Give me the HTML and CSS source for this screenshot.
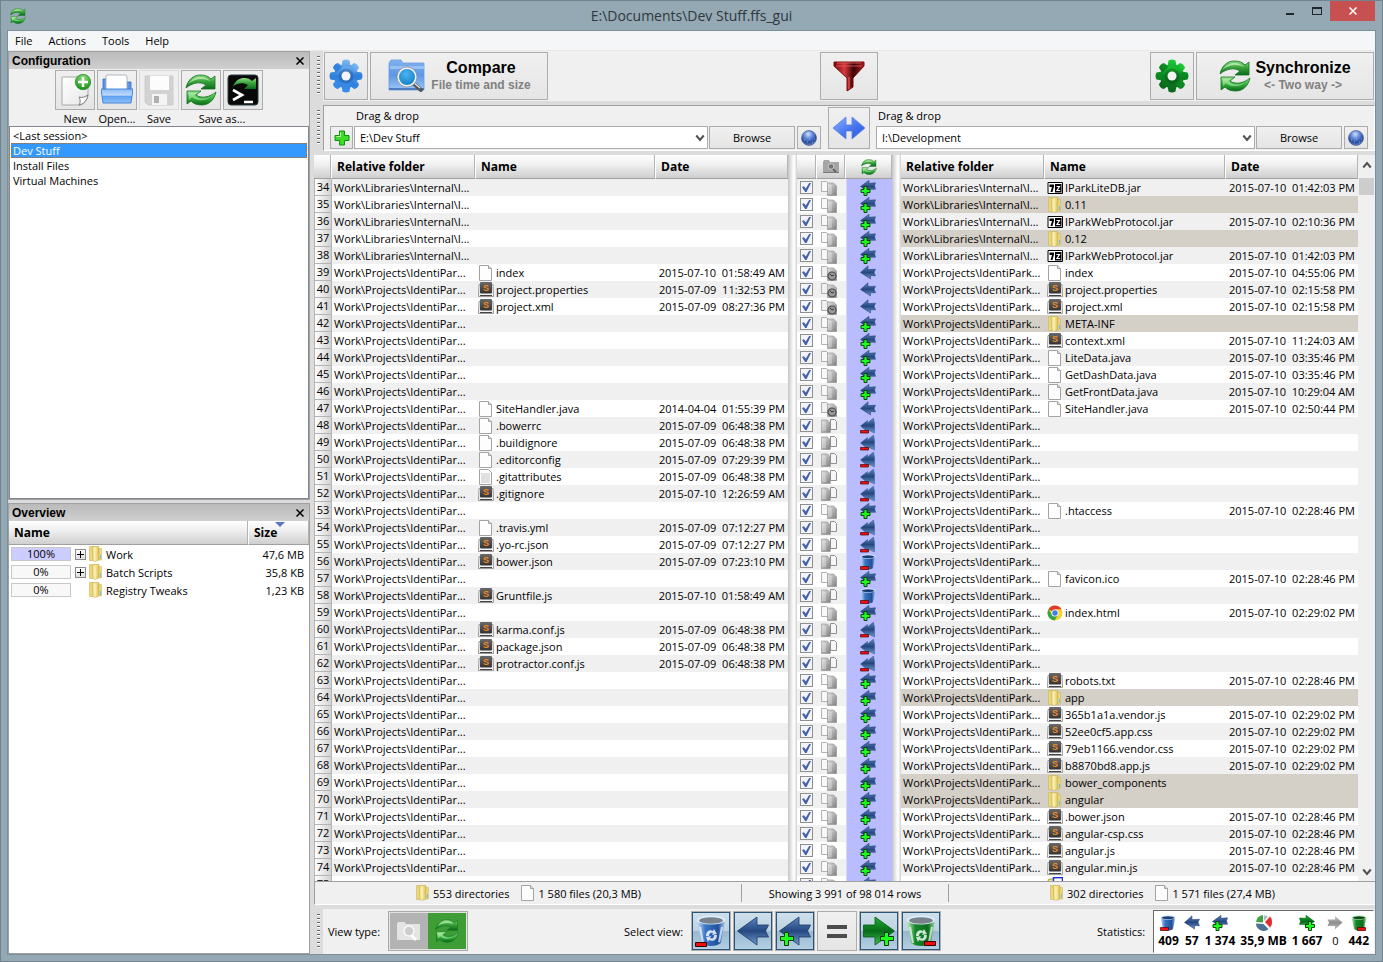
FILE: index.html
```html
<!DOCTYPE html>
<html lang="en">
<head>
<meta charset="utf-8">
<title>E:\Documents\Dev Stuff.ffs_gui</title>
<link rel="stylesheet" href="styles.css">
</head>
<body>
<svg class="defs" aria-hidden="true">
  <defs>
    <linearGradient id="gGreen" x1="0" y1="0" x2="0" y2="1"><stop offset="0" stop-color="#8fdc83"/><stop offset=".45" stop-color="#3aa53c"/><stop offset="1" stop-color="#0b6a1a"/></linearGradient>
    <linearGradient id="gGreen2" x1="0" y1="1" x2="0" y2="0"><stop offset="0" stop-color="#0a6a18"/><stop offset=".5" stop-color="#35b23c"/><stop offset="1" stop-color="#a4ec9b"/></linearGradient>
    <linearGradient id="gGearB" x1="0" y1="0" x2="0" y2="1"><stop offset="0" stop-color="#7fbaf2"/><stop offset=".5" stop-color="#2f7fdc"/><stop offset="1" stop-color="#3a8cea"/></linearGradient>
    <linearGradient id="gGearG" x1="0" y1="0" x2="0" y2="1"><stop offset="0" stop-color="#1fd038"/><stop offset=".45" stop-color="#0c8a22"/><stop offset="1" stop-color="#0a661a"/></linearGradient>
    <linearGradient id="gFolderB" x1="0" y1="0" x2="0" y2="1"><stop offset="0" stop-color="#82b3ee"/><stop offset=".5" stop-color="#5c97e6"/><stop offset="1" stop-color="#9cc7f7"/></linearGradient>
    <linearGradient id="gTray" x1="0" y1="0" x2="0" y2="1"><stop offset="0" stop-color="#8dbcf5"/><stop offset=".45" stop-color="#bcd9fb"/><stop offset=".5" stop-color="#5e9df0"/><stop offset="1" stop-color="#8ec3fb"/></linearGradient>
    <linearGradient id="gFolder" x1="0" y1="0" x2="1" y2="0"><stop offset="0" stop-color="#e8d170"/><stop offset=".4" stop-color="#fbf2b8"/><stop offset="1" stop-color="#d9bd4c"/></linearGradient>
    <linearGradient id="gPage" x1="0" y1="0" x2="1" y2="1"><stop offset="0" stop-color="#fff"/><stop offset="1" stop-color="#e6e6e6"/></linearGradient>
    <linearGradient id="gGreyPage" x1="0" y1="0" x2="1" y2="1"><stop offset="0" stop-color="#e2e2e2"/><stop offset="1" stop-color="#7e7e7e"/></linearGradient>
    <linearGradient id="gArrow" x1="0" y1="0" x2="0" y2="1"><stop offset="0" stop-color="#5b86c4"/><stop offset=".5" stop-color="#25477f"/><stop offset="1" stop-color="#6d9bd0"/></linearGradient>
    <linearGradient id="gArrowG" x1="0" y1="0" x2="0" y2="1"><stop offset="0" stop-color="#17b52c"/><stop offset=".5" stop-color="#076a19"/><stop offset="1" stop-color="#3fc24c"/></linearGradient>
    <linearGradient id="gArrowN" x1="0" y1="0" x2="0" y2="1"><stop offset="0" stop-color="#c8c8c8"/><stop offset=".5" stop-color="#8d8d8d"/><stop offset="1" stop-color="#c0c0c0"/></linearGradient>
    <linearGradient id="gSwap" x1="0" y1="0" x2="1" y2="1"><stop offset="0" stop-color="#8fb2ff"/><stop offset=".55" stop-color="#4675ef"/><stop offset="1" stop-color="#2b57d8"/></linearGradient>
    <linearGradient id="gFunnel" x1="0" y1="0" x2="1" y2="0"><stop offset="0" stop-color="#7d0a0c"/><stop offset=".35" stop-color="#d9393c"/><stop offset=".65" stop-color="#3a0405"/><stop offset="1" stop-color="#b01a1d"/></linearGradient>
    <linearGradient id="gBin" x1="0" y1="0" x2="1" y2="0"><stop offset="0" stop-color="#c9e2fb"/><stop offset=".3" stop-color="#3a76c4"/><stop offset=".75" stop-color="#1f4f9c"/><stop offset="1" stop-color="#a8cbf2"/></linearGradient>
    <linearGradient id="gBinG" x1="0" y1="0" x2="1" y2="0"><stop offset="0" stop-color="#c2efc2"/><stop offset=".3" stop-color="#15872a"/><stop offset=".75" stop-color="#0b6d1d"/><stop offset="1" stop-color="#9fdda3"/></linearGradient>
    <linearGradient id="gDark" x1="0" y1="0" x2="0" y2="1"><stop offset="0" stop-color="#6a6a6a"/><stop offset="1" stop-color="#333"/></linearGradient>
    <radialGradient id="gGlobe" cx=".45" cy=".25" r=".75"><stop offset="0" stop-color="#cfe0ff"/><stop offset=".35" stop-color="#6c92dd"/><stop offset=".75" stop-color="#274a9c"/><stop offset="1" stop-color="#6f8fd0"/></radialGradient>
    <radialGradient id="gBall" cx=".5" cy=".25" r=".8"><stop offset="0" stop-color="#8fe07a"/><stop offset="1" stop-color="#118a12"/></radialGradient>
    <radialGradient id="gLens" cx=".45" cy=".35" r=".7"><stop offset="0" stop-color="#4db4ee"/><stop offset="1" stop-color="#0b7cc4"/></radialGradient>
  </defs>

  <symbol id="sync" viewBox="0 0 32 32">
    <path d="M1 14C3 5 9 1 15 1c5 0 8 1 11 4l4-3v13H16l5-4C15 7 7 9 1 14z" fill="url(#gGreen)" stroke="#14701f" stroke-width=".8"/>
    <path d="M3 10C7 4 13 2.500 17 3c4 .4 6 2 8 4-6-3-15-3-22 3z" fill="#c9f5bf" opacity=".7"/>
    <path d="M31 18C29 27 23 31 17 31c-5 0-8-1-11-4l-4 3V17h14l-5 4c6 4 14 2 20-3z" fill="url(#gGreen2)" stroke="#14701f" stroke-width=".8"/>
    <path d="M4 19h8l-3 2c5 5 13 4 18 1-6 5-15 6-20 1l-3 3z" fill="#c9f5bf" opacity=".5"/>
  </symbol>
  <symbol id="new" viewBox="0 0 32 32">
    <path d="M3 3h26v18c-1 5-4 9-8 10H3z" fill="url(#gPage)" stroke="#a9a9a9"/>
    <path d="M20 31c2-3 1-6 0-8 3 1 6 0 9-2-1 5-4 9-9 10z" fill="#fff" stroke="#777"/>
    <circle cx="24" cy="8" r="7.700" fill="url(#gBall)" stroke="#0d7d10" stroke-width=".6"/>
    <path d="M24 3v10M19 8h10" stroke="#fff" stroke-width="2.400"/>
  </symbol>
  <symbol id="open" viewBox="0 0 32 32">
    <path d="M2 16V5h6v11M24 16V8h6v8" fill="#5b97e8" stroke="#2d6fce" stroke-width=".8"/>
    <path d="M6 1h19l1 2v15H5V2z" fill="#fff" stroke="#9fa8b5" stroke-width=".8"/>
    <path d="M0 15h32l-2 14H2z" fill="url(#gTray)" stroke="#3a7bd6" stroke-width=".9"/>
  </symbol>
  <symbol id="save" viewBox="0 0 32 32">
    <path d="M2 2h28v29H5l-3-3z" fill="#d2d2d2" stroke="#c6c6c6" stroke-width=".8"/>
    <path d="M7 2h19v14H7z" fill="#fcfcfc"/><path d="M9 20h15v11H9z" fill="#f4f4f4"/><path d="M11 22h5v7h-5z" fill="#b0b0b0"/>
  </symbol>
  <symbol id="batch" viewBox="0 0 32 32">
    <rect x="1" y="1" width="30" height="30" rx="3" fill="#080808" stroke="#2c3c40"/>
    <path d="M6 12c3-6 7-8 11-8 4 0 6 1 8 3l4-3v11H17l4-4c-5-3-10-2-15 1z" fill="url(#gGreen)"/>
    <path d="M6 16l9 5-9 5M17 28h9" fill="none" stroke="#fff" stroke-width="2.600"/>
  </symbol>
  <symbol id="gear" viewBox="0 0 34 34">
    <circle cx="17" cy="17" r="12"/>
    <path d="M13.500 1.500q3.500-2 7 0l1 6h-9zM13.500 32.500q3.500 2 7 0l1-6h-9zM1.500 13.500q-2 3.500 0 7l6 1v-9zM32.500 13.500q2 3.500 0 7l-6 1v-9z"/>
    <path transform="rotate(45 17 17)" d="M13.500 2q3.500-2 7 0l1 6h-9zM13.500 32q3.500 2 7 0l1-6h-9zM2 13.500q-2 3.500 0 7l6 1v-9zM32 13.500q2 3.500 0 7l-6 1v-9z"/>
    <circle cx="17" cy="17" r="7.500" fill="#000" opacity=".15"/>
    <circle cx="17" cy="17" r="4.500" fill="#f4f4f4"/>
  </symbol>
  <symbol id="compare" viewBox="0 0 40 34">
    <path d="M2 4l2-3h10l2 3h21v27H2z" fill="url(#gFolderB)" stroke="#6a9be0" stroke-width=".8"/>
    <path d="M3 7h34v3H3z" fill="#a9ccf6" opacity=".7"/><path d="M2 29h35v2H2z" fill="#4d7dc0"/>
    <path d="M26 24l8 7" stroke="#555" stroke-width="4" stroke-linecap="round"/><path d="M26 23l7 6" stroke="#ddd" stroke-width="1.500"/>
    <circle cx="20" cy="18" r="9" fill="url(#gLens)" stroke="#f2f2f2" stroke-width="2"/><circle cx="20" cy="18" r="10" fill="none" stroke="#8a8a8a" stroke-width=".7"/>
  </symbol>
  <symbol id="funnel" viewBox="0 0 32 32">
    <path d="M1 2h30v4L20 18v9l-6 4V18L1 6z" fill="url(#gFunnel)" stroke="#7a0c0e"/>
    <path d="M3 6h26M4 3h24" stroke="#e06265" stroke-width=".8"/><path d="M16 17v12" stroke="#e0484b" stroke-width="1.500"/>
  </symbol>
  <symbol id="plus" viewBox="0 0 16 16"><path d="M5.500 1h5v4.500H15v5h-4.500V15h-5v-4.500H1v-5h4.500z" fill="#3ddc2a" stroke="#0f8f0b"/><path d="M6.500 2.500v4h-4" fill="none" stroke="#b5f7a5"/></symbol>
  <symbol id="globe" viewBox="0 0 16 16"><circle cx="8" cy="8" r="7.500" fill="url(#gGlobe)" stroke="#3c4f80" stroke-width=".6"/><path d="M3 10h.8M6 12h.8M11 12h.8M13 9h.8M8 9h.8" fill="none" stroke="#b5ccff" stroke-width=".8"/></symbol>
  <symbol id="swap" viewBox="0 0 34 24"><path d="M14 1v8h6V1l13 11-13 11v-8h-6v8L1 12z" fill="url(#gSwap)" stroke="#5b7fe6" stroke-width=".8"/></symbol>
  <symbol id="folder" viewBox="0 0 16 16"><path d="M1.500.500h7v14h-7z" fill="#ecd87c" stroke="#cfb55a" stroke-width=".6"/><path d="M4 1l4-.5h3V14l-4 1.500-2-1z" fill="url(#gFolder)" stroke="#c9ad45" stroke-width=".5"/><path d="M11 2.500h2.500V14H11z" fill="#ecd982" stroke="#cdb350" stroke-width=".5"/><path d="M12.500 9v4" stroke="#6fc0ee"/></symbol>
  <symbol id="file" viewBox="0 0 16 16"><path d="M1.500.500h9l3 3v12h-12z" fill="#fdfdfd" stroke="#a3a3a3"/><path d="M10.500.500v3h3" fill="#ddd" stroke="#a3a3a3"/></symbol>
  <symbol id="text" viewBox="0 0 16 16"><path d="M1.500.500h9l3 3v12h-12z" fill="#fdfdfd" stroke="#a3a3a3"/><path d="M3 5h9M3 7h9M3 9h9M3 11h9M3 13h9" stroke="#b5b5b5" stroke-width=".8"/></symbol>
  <symbol id="subl" viewBox="0 0 16 16"><path d="M1 2.500L.5 14.500h15L15 2.500z" fill="#f4f4f4" stroke="#9a9a9a"/><rect x="2" y="0" width="12" height="11.500" rx="1" fill="url(#gDark)"/><path d="M2 13.500h12" stroke="#444"/><text x="8" y="9" text-anchor="middle" font-family="Liberation Sans,sans-serif" font-size="9" font-weight="bold" fill="#f08a26">S</text></symbol>
  <symbol id="zip" viewBox="0 0 16 16"><path d="M1 2.500h14.500v11H1z" fill="#fff" stroke="#000"/><path d="M2.500 4.500h4.500v2L5.500 12H3.500L5 7H2.500z"/><path d="M8 4h6.500v8.500H8z"/><path d="M9.500 6.500h3L10 10.500h3.200" fill="none" stroke="#fff" stroke-width="1.200"/></symbol>
  <symbol id="chrome" viewBox="0 0 16 16"><circle cx="8" cy="8" r="7.500" fill="#fbd12e"/><path d="M8 8L1.500 4.300A7.500 7.500 0 0 1 14.500 4.300H8z" fill="#de3b2e"/><path d="M1.500 4.300A7.500 7.500 0 0 0 7.500 15.500L11 10 8 8 4.500 9z" fill="#33a449"/><circle cx="8" cy="8" r="3.600" fill="#fff"/><circle cx="8" cy="8" r="2.700" fill="#3f7de0"/></symbol>
  <symbol id="html" viewBox="0 0 16 16"><rect x="1" y="2" width="9" height="12" rx="2" fill="#f3e691" stroke="#a39a35"/><rect x="6.500" y=".7" width="9" height="9" fill="#fff" stroke="#1b2be0" stroke-width="1.400"/></symbol>
  <symbol id="onlyright" viewBox="0 0 16 16"><path d="M.500 1.500h5l2 2v8h-7z" fill="#f8f8f8" stroke="#a0a0a0" stroke-width=".8"/><path d="M6.500 3h6l3 3v9.500h-9z" fill="url(#gGreyPage)" stroke="#8b8b8b" stroke-width=".6"/><path d="M8 5v9M10 5v9" stroke="#eee" stroke-width=".6"/></symbol>
  <symbol id="onlyleft" viewBox="0 0 16 16"><path d="M9.500 1.500h4l2 2v8h-6z" fill="#f6f6f6" stroke="#8e8e8e"/><path d="M.300 2h6l3 3v9.500h-9z" fill="url(#gGreyPage)" stroke="#8b8b8b" stroke-width=".6"/><path d="M2 4v9M4 4v9" stroke="#eee" stroke-width=".7"/></symbol>
  <symbol id="newer" viewBox="0 0 16 16"><path d="M.500 1.500h5l2 2v8h-7z" fill="#f0f0f0" stroke="#9c9c9c" stroke-width=".8"/><path d="M6.500 3h6l3 3v9.500h-9z" fill="url(#gGreyPage)" stroke="#8b8b8b" stroke-width=".6"/><circle cx="11" cy="11" r="4" fill="#999" stroke="#4a4a4a" stroke-width="1.200"/><path d="M9 9l2 2 2-1" fill="none" stroke="#333"/></symbol>
  <symbol id="left" viewBox="0 0 16 16"><path d="M.500 7.500L8 .800V4.500h2l5.500-.3-1.500 3 1.500 3.500H10.500V14z" fill="url(#gArrow)" stroke="#1f3a68" stroke-width=".5"/></symbol>
  <symbol id="right" viewBox="0 0 16 16"><path d="M15.500 7.500L8 1v3.500H.500L2 7.500.500 11H8v3.500z" stroke="none"/></symbol>
  <symbol id="addleft" viewBox="0 0 16 16"><path d="M.500 6.500L9 .300v3l6.500-.5-1 3 1 3.500H9.500V13z" fill="url(#gArrow)" stroke="#1f3a68" stroke-width=".5"/><path d="M4 6.500h3v3h3v3H7v3H4v-3H1v-3h3z" fill="#1bff1b" stroke="#063806" stroke-width=".9"/></symbol>
  <symbol id="addright" viewBox="0 0 16 16"><path d="M15.500 6.500L7 .300v3L.500 3l1 3-1 3.500H6.500V13z" fill="url(#gArrowG)" stroke="#07531a" stroke-width=".5"/><path d="M9.500 6.500h3v3h3v3h-3v3h-3v-3h-3v-3h3z" fill="#1bff1b" stroke="#063806" stroke-width=".9"/></symbol>
  <symbol id="bigleft" viewBox="0 0 32 32"><path d="M.500 16L20 2v8h11.500l-3 6 3 6H20v8z" fill="url(#gArrow)" stroke="#1c3560" stroke-width=".8"/></symbol>
  <symbol id="bigright" viewBox="0 0 32 32"><path d="M31.500 16L12 2v8H.500v12H12v8z" fill="url(#gArrowG)" stroke="#07531a" stroke-width=".8"/></symbol>
  <symbol id="badge" viewBox="0 0 16 16"><path d="M5.500 1.500h4v4h5v4h-5v5h-4v-5h-4v-4h4z" fill="#1bff1b" stroke="#063806"/></symbol>
  <symbol id="moveleft" viewBox="0 0 16 16"><path d="M.500 8L7.500 2.500V5L13.500 0 14 3l.5 2v10l-5.500-2.500-2 1z" fill="url(#gArrow)" stroke="#34598f" stroke-width=".5"/><path d="M.500 12.500h8v2.500h-8z" fill="#f01010" stroke="#4d0000" stroke-width=".7"/></symbol>
  <symbol id="bin" viewBox="0 0 32 32"><path d="M2 5l4 23c5 4 15 4 20 0l4-23z"/><ellipse cx="16" cy="5" rx="14" ry="4.500" fill="#dcecfb"/><ellipse cx="16" cy="5.500" rx="12" ry="3.200" fill="#000" opacity=".45"/><path d="M5 12l3 16M27 12l-3 15" stroke="#fff" stroke-width="2" opacity=".65"/><path d="M11 21c0-5 4-7 7-5l1-2 3 5-5 1 1-2c-2-1-4 0-4 3zM22 20c0 5-4 7-8 5l-1 2-2-5 5-1-1 2c3 1 4 0 4-3z" fill="#fff" opacity=".8"/></symbol>
  <symbol id="minus" viewBox="0 0 12 5"><path d="M.5.5h11v4H.5z" fill="#f20d0d" stroke="#3d0000"/></symbol>
  <symbol id="recycle" viewBox="0 0 16 16"><path d="M.500 2L3 14c3 2 7 2 10 0l2.500-12z" fill="url(#gBin)"/><ellipse cx="8" cy="2.500" rx="7.500" ry="2.200" fill="#d5e8fb"/><ellipse cx="8" cy="2.800" rx="6.300" ry="1.500" fill="#173c78"/><path d="M.5 12.500h8v3h-8z" fill="#f01010" stroke="#4d0000" stroke-width=".7"/></symbol>
  <symbol id="recycleg" viewBox="0 0 16 16"><path d="M.500 2L3 14c3 2 7 2 10 0l2.500-12z" fill="url(#gBinG)"/><ellipse cx="8" cy="2.500" rx="7.500" ry="2.200" fill="#c5ecc5"/><ellipse cx="8" cy="2.800" rx="6.300" ry="1.500" fill="#0a4a14"/><path d="M6.500 12.500h8v3h-8z" fill="#f01010" stroke="#4d0000" stroke-width=".7"/></symbol>
  <symbol id="pie" viewBox="0 0 16 16"><path d="M7 7.500V0A7.500 7.500 0 0 0 0 7z" fill="#3da345"/><path d="M9 7L14 1.500A8 8 0 0 1 14 12.500z" fill="#e02c2c" stroke="#f88" stroke-width=".4"/><path d="M8 6V.5a7 7 0 0 1 4 1.200z" fill="#a9bac9"/><path d="M0 8.500l7.500.5 5 5A7.500 7.500 0 0 1 0 8.500z" fill="#4d7291"/></symbol>
  <symbol id="camera" viewBox="0 0 26 20"><path d="M1 3l1-2h7l1 2h14v16H1z" fill="currentColor"/><path d="M15 14l5 5" stroke="#fff" stroke-width="2.500"/><circle cx="13" cy="10" r="5" fill="#cdcdcd" stroke="#fafafa" stroke-width="1.500"/></symbol>
  <symbol id="folderfind" viewBox="0 0 16 14"><path d="M0 2l1-2h5l1 2h9v11H0z" fill="#a5a5a5"/><path d="M0 12h16v1H0z" fill="#777"/><path d="M9 8l4 4" stroke="#555" stroke-width="1.600"/><circle cx="8" cy="6.500" r="2.800" fill="#777" stroke="#ddd" stroke-width=".8"/></symbol>
  <symbol id="chev" viewBox="0 0 8 8"><path d="M1 2l3 3.500L7 2" fill="none" stroke="#505050" stroke-width="1.600"/></symbol>
  <symbol id="cross" viewBox="0 0 8 8"><path d="M.5.5l7 7M7.500.5l-7 7" stroke="currentColor" stroke-width="1.500"/></symbol>
</svg>

<div class="window">
  <header class="titlebar">
    <svg class="i16 appicon"><use href="#sync"/></svg>
    <h1 class="title">E:\Documents\Dev Stuff.ffs_gui</h1>
    <div class="winbtns">
      <button class="winbtn" aria-label="Minimize"><span class="min"></span></button>
      <button class="winbtn" aria-label="Maximize"><span class="max"></span></button>
      <button class="winbtn close" aria-label="Close"><svg class="i8"><use href="#cross"/></svg></button>
    </div>
  </header>
  <div class="client">
    <nav class="menu"><button>File</button><button>Actions</button><button>Tools</button><button>Help</button></nav>
    <div class="body">
      <aside class="side">
        <section class="pane">
          <div class="caption"><h2>Configuration</h2><button aria-label="Close configuration"><svg class="i8"><use href="#cross"/></svg></button></div>
          <div class="cfgbar">
            <div class="tool"><button class="btn sq" id="b1"><svg class="i32"><use href="#new"/></svg></button><label for="b1">New</label></div>
            <div class="tool"><button class="btn sq" id="b2"><svg class="i32"><use href="#open"/></svg></button><label for="b2">Open...</label></div>
            <div class="tool"><button class="btn sq off" id="b3"><svg class="i32"><use href="#save"/></svg></button><label for="b3">Save</label></div>
            <div class="tool"><div class="pair"><button class="btn sq" id="b4"><svg class="i32"><use href="#sync"/></svg></button><button class="btn sq" aria-label="Save as batch job"><svg class="i32"><use href="#batch"/></svg></button></div><label for="b4">Save as...</label></div>
          </div>
          <ul class="list"><li>&lt;Last session&gt;</li><li class="sel">Dev Stuff</li><li>Install Files</li><li>Virtual Machines</li></ul>
        </section>
        <section class="pane grow">
          <div class="caption"><h2>Overview</h2><button aria-label="Close overview"><svg class="i8"><use href="#cross"/></svg></button></div>
          <div class="treebox">
            <table class="tree">
              <colgroup><col><col class="csize"></colgroup>
              <thead><tr><th>Name</th><th class="sorted">Size</th></tr></thead>
              <tbody>
                <tr><td><div class="node"><span class="pct full">100%</span><button class="exp" aria-label="Expand Work"></button><svg class="i16"><use href="#folder"/></svg>Work</div></td><td>47,6 MB</td></tr>
                <tr><td><div class="node"><span class="pct">0%</span><button class="exp" aria-label="Expand Batch Scripts"></button><svg class="i16"><use href="#folder"/></svg>Batch Scripts</div></td><td>35,8 KB</td></tr>
                <tr><td><div class="node"><span class="pct">0%</span><span class="noexp"></span><svg class="i16"><use href="#folder"/></svg>Registry Tweaks</div></td><td>1,23 KB</td></tr>
              </tbody>
            </table>
          </div>
        </section>
      </aside>

      <main class="main">
        <div class="strip">
          <span class="grip"></span>
          <div class="topbar">
            <div class="group"><button class="btn cog blue" aria-label="Comparison settings"><svg class="i34"><use href="#gear"/></svg></button><button class="btn big"><svg class="icmp"><use href="#compare"/></svg><span class="two"><b>Compare</b><small>File time and size</small></span></button></div>
            <button class="btn filter" aria-label="Filter"><svg class="i32"><use href="#funnel"/></svg></button>
            <div class="group"><button class="btn cog green" aria-label="Synchronization settings"><svg class="i34"><use href="#gear"/></svg></button><button class="btn big"><svg class="i32"><use href="#sync"/></svg><span class="two"><b>Synchronize</b><small>&lt;- Two way -&gt;</small></span></button></div>
          </div>
        </div>

        <div class="strip">
          <span class="grip"></span>
          <div class="paths">
            <div class="side-path lhs">
              <label for="p1">Drag &amp; drop</label>
              <div class="fields"><button class="btn fld add" aria-label="Add folder pair"><svg class="i16"><use href="#plus"/></svg></button><div class="combo"><select id="p1"><option>E:\Dev Stuff</option></select><svg class="chev"><use href="#chev"/></svg></div><button class="btn fld browse">Browse</button><button class="btn fld net" aria-label="Cloud storage"><svg class="i16"><use href="#globe"/></svg></button></div>
            </div>
            <button class="btn swap" aria-label="Swap sides"><svg class="iswap"><use href="#swap"/></svg></button>
            <div class="side-path rhs">
              <label for="p2">Drag &amp; drop</label>
              <div class="fields"><div class="combo"><select id="p2"><option>I:\Development</option></select><svg class="chev"><use href="#chev"/></svg></div><button class="btn fld browse">Browse</button><button class="btn fld net" aria-label="Cloud storage"><svg class="i16"><use href="#globe"/></svg></button></div>
            </div>
          </div>
        </div>

        <div class="grid">
          <div class="gcol gl"><table class="files"><colgroup><col class="cnum"><col class="crel"><col><col class="cdate"></colgroup><thead><tr><th></th><th>Relative folder</th><th>Name</th><th>Date</th></tr></thead><tbody id="lrows"></tbody></table></div>
          <div class="split"></div>
          <div class="gcol gm"><table class="files mid"><colgroup><col class="cchk"><col class="ccat"><col class="cact"></colgroup><thead><tr><th></th><th><svg class="icat"><use href="#folderfind"/></svg></th><th><svg class="i16"><use href="#sync"/></svg></th></tr></thead><tbody id="mrows"></tbody></table></div>
          <div class="split"></div>
          <div class="gcol gr"><table class="files"><colgroup><col class="crel"><col><col class="cdate"></colgroup><thead><tr><th>Relative folder</th><th>Name</th><th>Date</th></tr></thead><tbody id="rrows"></tbody></table></div>
          <div class="scroll"><svg class="chev up"><use href="#chev"/></svg><span class="thumb"></span><svg class="chev"><use href="#chev"/></svg></div>
        </div>

        <div class="status">
          <div class="cell"><svg class="i16"><use href="#folder"/></svg><span>553 directories</span><svg class="i16 gap"><use href="#file"/></svg><span>1 580 files (20,3 MB)</span></div>
          <div class="cell center">Showing 3 991 of 98 014 rows</div>
          <div class="cell"><svg class="i16"><use href="#folder"/></svg><span>302 directories</span><svg class="i16 gap"><use href="#file"/></svg><span>1 571 files (27,4 MB)</span></div>
        </div>

        <div class="strip bottom">
          <span class="grip"></span>
          <div class="viewbar">
            <div class="group mid"><span>View type:</span><div class="toggle"><button class="cat" aria-label="Category"><svg class="icam"><use href="#camera"/></svg></button><button class="act" aria-label="Action"><svg class="i24"><use href="#sync"/></svg></button></div></div>
            <div class="group mid"><span>Select view:</span><div class="views">
              <button class="btn sq on" aria-label="Delete left"><svg class="i32" viewBox="0 0 32 32"><use href="#bin" fill="url(#gBin)"/><use href="#minus" x="0" y="27" width="12" height="5"/></svg></button>
              <button class="btn sq on" aria-label="Update left"><svg class="i32"><use href="#bigleft"/></svg></button>
              <button class="btn sq on" aria-label="Create left"><svg class="i32" viewBox="0 0 32 32"><use href="#bigleft"/><use href="#badge" x="0" y="16" width="16" height="16"/></svg></button>
              <button class="btn sq" aria-label="Equal"><span class="eq"></span></button>
              <button class="btn sq on" aria-label="Create right"><svg class="i32" viewBox="0 0 32 32"><use href="#bigright"/><use href="#badge" x="16" y="16" width="16" height="16"/></svg></button>
              <button class="btn sq on" aria-label="Delete right"><svg class="i32" viewBox="0 0 32 32"><use href="#bin" fill="url(#gBinG)"/><use href="#minus" x="19" y="26" width="12" height="5"/></svg></button>
            </div></div>
            <div class="group mid"><span>Statistics:</span><div class="stats">
              <div><svg class="i16"><use href="#recycle"/></svg><b>409</b></div>
              <div><svg class="i16"><use href="#left"/></svg><b>57</b></div>
              <div><svg class="i16"><use href="#addleft"/></svg><b>1 374</b></div>
              <div><svg class="i16"><use href="#pie"/></svg><b>35,9 MB</b></div>
              <div><svg class="i16"><use href="#addright"/></svg><b>1 667</b></div>
              <div><svg class="i16 grey"><use href="#right"/></svg><span>0</span></div>
              <div><svg class="i16"><use href="#recycleg"/></svg><b>442</b></div>
            </div></div>
          </div>
        </div>
      </main>
    </div>
  </div>
</div>
<script src="script.js"></script>
</body>
</html>
```
FILE: styles.css
```css
* { box-sizing: border-box; }
body { margin: 0; font: 11px/15px "Open Sans", "Noto Sans", sans-serif; color: #000; }
button, select { font: inherit; color: inherit; margin: 0; padding: 0; border: 0; background: none; }
h1, h2, ul { margin: 0; padding: 0; list-style: none; font: inherit; }
svg { display: block; flex: none; }
.defs { position: absolute; width: 0; height: 0; }
.i8 { width: 8px; height: 8px; }
.i16 { width: 16px; height: 16px; }
.i24 { width: 24px; height: 24px; }
.i32 { width: 32px; height: 32px; }
.i34 { width: 34px; height: 34px; }

.window { height: 100vh; display: flex; flex-direction: column; background: #95a9b4; border: 1px solid #70838e; padding: 0 7px 7px; }
.titlebar { height: 30px; flex: none; display: grid; grid-template-columns: 1fr auto 1fr; align-items: center; }
.appicon { margin-left: 2px; }
.title { font-size: 14px; line-height: 20px; color: #2e383e; }
.winbtns { display: flex; justify-content: flex-end; align-self: start; }
.winbtn { width: 27px; height: 20px; display: flex; align-items: center; justify-content: center; }
.min { width: 8px; height: 2px; background: #1f272b; margin-top: 6px; }
.max { width: 10px; height: 8px; border: 1px solid #1f272b; border-top-width: 2px; }
.close { width: 45px; background: #c75050; color: #fff; }
.client { flex: 1; min-height: 0; display: flex; flex-direction: column; background: #dcdcdc; outline: 1px solid #7b8f9b; }
.menu { height: 20px; flex: none; display: flex; gap: 16px; padding: 0 7px; background: #f5f6f7; border-bottom: 1px solid #e6e7e8; }
.body { flex: 1; min-height: 0; display: flex; gap: 4px; }

.side { width: 302px; flex: none; display: flex; flex-direction: column; gap: 3px; }
.pane { border: 1px solid #a0a0a0; background: #f0f0f0; display: flex; flex-direction: column; height: 449px; }
.pane.grow { flex: 1; height: auto; }
.caption { height: 17px; flex: none; display: flex; align-items: center; justify-content: space-between; padding: 0 5px 0 3px; background: linear-gradient(#bababa, #d0d0d0); }
.caption h2 { font: bold 12px/14px "Liberation Sans", sans-serif; }
.cfgbar { display: flex; justify-content: center; gap: 2px; padding-top: 1px; height: 57px; flex: none; }
.tool { display: flex; flex-direction: column; align-items: center; width: 40px; gap: 1px; white-space: nowrap; }
.tool:last-child { width: 82px; }
.pair, .views { display: flex; gap: 2px; }
.btn { display: flex; align-items: center; justify-content: center; border: 1px solid #acacac; background: linear-gradient(#f0f0f0, #e5e5e5); }
.sq { width: 40px; height: 40px; flex: none; }
.off { border-color: #d9d9d9; background: #efefef; }
.list { flex: 1; background: #fff; border: 1px solid #828790; padding: 1px; }
.list li { padding: 0 1px; border: 1px solid transparent; line-height: 13px; }
.list .sel { background: #3399ff; color: #fff; border: 1px dotted #cc6600; }
.treebox { flex: 1; background: #fff; }

table { border-collapse: separate; border-spacing: 0; table-layout: fixed; width: 100%; }
th, td { padding: 0; text-align: left; white-space: nowrap; overflow: hidden; }
th { height: 24px; font-size: 12px; font-weight: bold; padding-left: 5px; background: linear-gradient(#fff, #f0f0f0 40%, #cfcfcf); border-right: 1px solid #fff; border-bottom: 1px solid #a0a0a0; box-shadow: inset -1px 0 #b4b4b4; }
th:last-child { border-right: 0; }
.csize { width: 60px; }
.sorted { position: relative; }
.sorted::after { content: ""; position: absolute; left: 26px; top: 1px; border: 5px solid transparent; border-top-color: #5a74cc; border-bottom: 0; }
.tree td { height: 18px; }
.tree td:last-child { text-align: right; padding-right: 5px; }
.node { display: flex; align-items: center; }
.pct { width: 60px; height: 14px; line-height: 12px; border: 1px solid #c8c8c8; background: #f8f8f8; text-align: center; margin: 0 4px 0 2px; }
.full { background: #ccccff; }
.exp, .noexp { width: 11px; height: 11px; margin-right: 2px; flex: none; }
.exp { border: 1px solid #8c8c8c; background: linear-gradient(#000, #000) center/7px 1px no-repeat, linear-gradient(#000, #000) center/1px 7px no-repeat, linear-gradient(#fff, #ddd); }
.node svg { margin-right: 2px; }

.main { flex: 1; min-width: 0; display: flex; flex-direction: column; }
.strip { display: flex; flex: none; margin-bottom: 4px; }
.grip { width: 3px; margin: 5px 3px; background: repeating-linear-gradient(#666 0 1px, #fff 1px 2px, #dcdcdc 2px 4px); }
.topbar { flex: 1; display: flex; justify-content: space-between; padding: 1px; background: #f0f0f0; }
.group { display: flex; gap: 2px; }
.group.mid { gap: 8px; align-items: center; }
.cog { width: 44px; height: 48px; }
.blue { fill: url(#gGearB); }
.green { fill: url(#gGearG); }
.big { width: 178px; height: 48px; gap: 4px; }
.icmp { width: 40px; height: 34px; }
.two { display: flex; flex-direction: column; align-items: center; font-family: "Liberation Sans", sans-serif; }
.two b { font-size: 16px; line-height: 18px; }
.two small { font-size: 12px; line-height: 16px; font-weight: bold; color: #808080; }
.filter { width: 58px; height: 48px; }
.paths { flex: 1; display: flex; background: #f0f0f0; border: 1px solid #a0a0a0; border-right-color: #fff; border-bottom-color: #fff; padding: 1px 6px 0; height: 46px; }
.side-path { display: flex; flex-direction: column; min-width: 0; gap: 3px; padding-top: 1px; }
.lhs { flex: 491 1 0; }
.rhs { flex: 492 1 0; }
.side-path label { padding-left: 2px; }
.lhs label { padding-left: 26px; }
.fields { display: flex; gap: 1px; }
.fld { height: 23px; flex: none; }
.add { width: 23px; }
.browse { width: 86px; }
.net { width: 24px; margin-left: 1px; }
.combo { position: relative; flex: 1; min-width: 0; }
.combo select { width: 100%; height: 23px; appearance: none; background: #fff; border: 1px solid #acacac; padding: 0 5px; }
.chev { width: 10px; height: 10px; }
.combo .chev { position: absolute; right: 3px; top: 7px; pointer-events: none; }
.swap { width: 42px; height: 42px; margin: 0 6px 0 7px; flex: none; }
.iswap { width: 34px; height: 24px; }

.grid { flex: 1; min-height: 0; display: flex; overflow: hidden; background: #fff; }
.gcol { overflow: hidden; min-width: 0; }
.gl { flex: 1 1 17px; }
.gr { flex: 1 1 0; }
.gm { width: 95px; flex: none; }
.split { width: 9px; flex: none; background: linear-gradient(90deg, #c4c4c4, #f4f4f4 50%, #fff 70%, #d0d0d0); }
.cnum { width: 18px; }
.crel { width: 144px; }
.cdate { width: 132px; }
.cchk { width: 20px; }
.ccat { width: 29px; }
.files td { height: 17px; line-height: 17px; padding-left: 2px; }
.files tbody tr:nth-child(odd) { background: #f0f0f0; }
.files tbody tr.dir { background: #d4cfc7; }
.files td.num { padding: 0; line-height: 16px; text-align: center; background: linear-gradient(90deg, #fff, #d2d2d2); border: solid #b4b4b4; border-width: 0 1px 1px; }
.files td.date { text-align: right; padding-right: 3px; white-space: pre; }
.fn { display: flex; align-items: center; height: 17px; gap: 2px; }
.mid th { padding: 0; }
.mid th svg { margin: 0 auto; }
.icat { width: 16px; height: 14px; }
.files td.cat { padding-left: 4px; }
.files td.act { background: #b9bcff; border-left: 1px solid #d8d8f0; padding-left: 13px; }
.chk { appearance: none; display: block; width: 13px; height: 13px; margin: 0; border: 1px solid #8e8f8f; background: #f2f4f8; }
.chk::after { content: ""; display: block; width: 9px; height: 9px; margin: 1px; background: #4560a8; clip-path: polygon(0 45%, 22% 35%, 42% 62%, 80% 0, 100% 0, 50% 100%, 35% 100%); }
.files td.box { padding-left: 3px; }
.scroll { width: 17px; flex: none; background: #f0f0f0; display: flex; flex-direction: column; align-items: center; padding: 5px 0 4px; }
.scroll .chev:last-child { margin-top: auto; }
.up { transform: rotate(180deg); }
.thumb { width: 15px; height: 17px; margin-top: 8px; background: #cdcdcd; }

.status { flex: none; height: 24px; display: flex; align-items: center; background: #f0f0f0; border-top: 1px solid #a0a0a0; border-bottom: 1px solid #fff; border-left: 1px solid #a0a0a0; margin-bottom: 4px; }
.cell { flex: 1; display: flex; justify-content: center; align-items: center; gap: 2px; }
.center { flex: none; width: 208px; height: 18px; border: solid #a0a0a0; border-width: 0 1px; }
.gap { margin-left: 9px; }
.bottom { margin: 0; }
.viewbar { flex: 1; height: 45px; display: flex; align-items: center; justify-content: space-between; background: #f0f0f0; padding: 0 1px 1px 5px; }
.toggle { display: flex; width: 80px; height: 40px; border: 1px solid #aaa; padding: 1px; background: #e4e4e4; }
.toggle button { flex: 1; display: flex; align-items: center; justify-content: center; }
.cat { color: #e4e4e4; }
.toggle .cat { background: #b3b3b3; }
.toggle .act { background: #3f9d36; }
.icam { width: 26px; height: 20px; }
.on { border: 2px solid #2c5474; background: linear-gradient(#cfdfea, #bdd2e1 50%, #98b8cf 50%, #b4cfe2); outline: 1px solid #b0b0b0; outline-offset: -1px; }
.eq { width: 20px; height: 13px; border: solid #4c4c4c; border-width: 4px 0; }
.stats { display: flex; gap: 5px; height: 43px; padding: 4px 4px 0; background: #fff; border: 1px solid #696969; border-right-color: #fff; border-bottom-color: #fff; }
.stats div { display: flex; flex-direction: column; align-items: center; gap: 2px; }
.stats b { font-size: 12px; }
.grey { fill: url(#gArrowN); }
```
FILE: script.js
```javascript
const LIB = "Work\\Libraries\\Internal\\I...";
const LP = "Work\\Projects\\IdentiPar...";
const RP = "Work\\Projects\\IdentiPark...";

// [category, action, left icon, left name, left date, right icon, right name, right date]
const R = (icon, name, date) => ["onlyright", "addleft", "", "", "", icon, name, date];
const L = (icon, name, date, act) => ["onlyleft", act || "moveleft", icon, name, date, "", "", ""];
const N = (icon, name, ld, rd) => ["newer", "left", icon, name, ld, icon, name, rd];
const D10 = "2015-07-10  ", D09 = "2015-07-09  ";

const rows = [
  R("zip", "IParkLiteDB.jar", D10 + "01:42:03 PM"),
  R("folder", "0.11", ""),
  R("zip", "IParkWebProtocol.jar", D10 + "02:10:36 PM"),
  R("folder", "0.12", ""),
  R("zip", "IParkWebProtocol.jar", D10 + "01:42:03 PM"),
  N("file", "index", D10 + "01:58:49 AM", D10 + "04:55:06 PM"),
  N("subl", "project.properties", D09 + "11:32:53 PM", D10 + "02:15:58 PM"),
  N("subl", "project.xml", D09 + "08:27:36 PM", D10 + "02:15:58 PM"),
  R("folder", "META-INF", ""),
  R("subl", "context.xml", D10 + "11:24:03 AM"),
  R("file", "LiteData.java", D10 + "03:35:46 PM"),
  R("file", "GetDashData.java", D10 + "03:35:46 PM"),
  R("file", "GetFrontData.java", D10 + "10:29:04 AM"),
  N("file", "SiteHandler.java", "2014-04-04  01:55:39 PM", D10 + "02:50:44 PM"),
  L("file", ".bowerrc", D09 + "06:48:38 PM"),
  L("file", ".buildignore", D09 + "06:48:38 PM"),
  L("file", ".editorconfig", D09 + "07:29:39 PM"),
  L("text", ".gitattributes", D09 + "06:48:38 PM"),
  L("subl", ".gitignore", D10 + "12:26:59 AM"),
  R("file", ".htaccess", D10 + "02:28:46 PM"),
  L("file", ".travis.yml", D09 + "07:12:27 PM"),
  L("subl", ".yo-rc.json", D09 + "07:12:27 PM"),
  L("subl", "bower.json", D09 + "07:23:10 PM", "recycle"),
  R("file", "favicon.ico", D10 + "02:28:46 PM"),
  L("subl", "Gruntfile.js", D10 + "01:58:49 AM", "recycle"),
  R("chrome", "index.html", D10 + "02:29:02 PM"),
  L("subl", "karma.conf.js", D09 + "06:48:38 PM"),
  L("subl", "package.json", D09 + "06:48:38 PM"),
  L("subl", "protractor.conf.js", D09 + "06:48:38 PM"),
  R("subl", "robots.txt", D10 + "02:28:46 PM"),
  R("folder", "app", ""),
  R("subl", "365b1a1a.vendor.js", D10 + "02:29:02 PM"),
  R("subl", "52ee0cf5.app.css", D10 + "02:29:02 PM"),
  R("subl", "79eb1166.vendor.css", D10 + "02:29:02 PM"),
  R("subl", "b8870bd8.app.js", D10 + "02:29:02 PM"),
  R("folder", "bower_components", ""),
  R("folder", "angular", ""),
  R("subl", ".bower.json", D10 + "02:28:46 PM"),
  R("subl", "angular-csp.css", D10 + "02:28:46 PM"),
  R("subl", "angular.js", D10 + "02:28:46 PM"),
  R("subl", "angular.min.js", D10 + "02:28:46 PM"),
  R("html", "angular.min.js.gzip", D10 + "02:28:46 PM")
];

const icon = id => `<svg class="i16"><use href="#${id}"/></svg>`;
const file = (id, name) => `<td><div class="fn">${name ? icon(id) + name : ""}</div></td>`;
let left = "", mid = "", right = "";
rows.forEach(([cat, act, li, ln, ld, ri, rn, rd], i) => {
  const n = 34 + i;
  left += `<tr><td class="num">${n}</td><td>${i < 5 ? LIB : LP}</td>${file(li, ln)}<td class="date">${ld}</td></tr>`;
  mid += `<tr><td class="box"><input class="chk" type="checkbox" checked aria-label="Include row ${n}"></td><td class="cat">${icon(cat)}</td><td class="act">${icon(act)}</td></tr>`;
  right += `<tr${ri === "folder" ? ' class="dir"' : ""}><td>${i < 5 ? LIB : RP}</td>${file(ri, rn)}<td class="date">${rd}</td></tr>`;
});
document.getElementById("lrows").innerHTML = left;
document.getElementById("mrows").innerHTML = mid;
document.getElementById("rrows").innerHTML = right;
```
